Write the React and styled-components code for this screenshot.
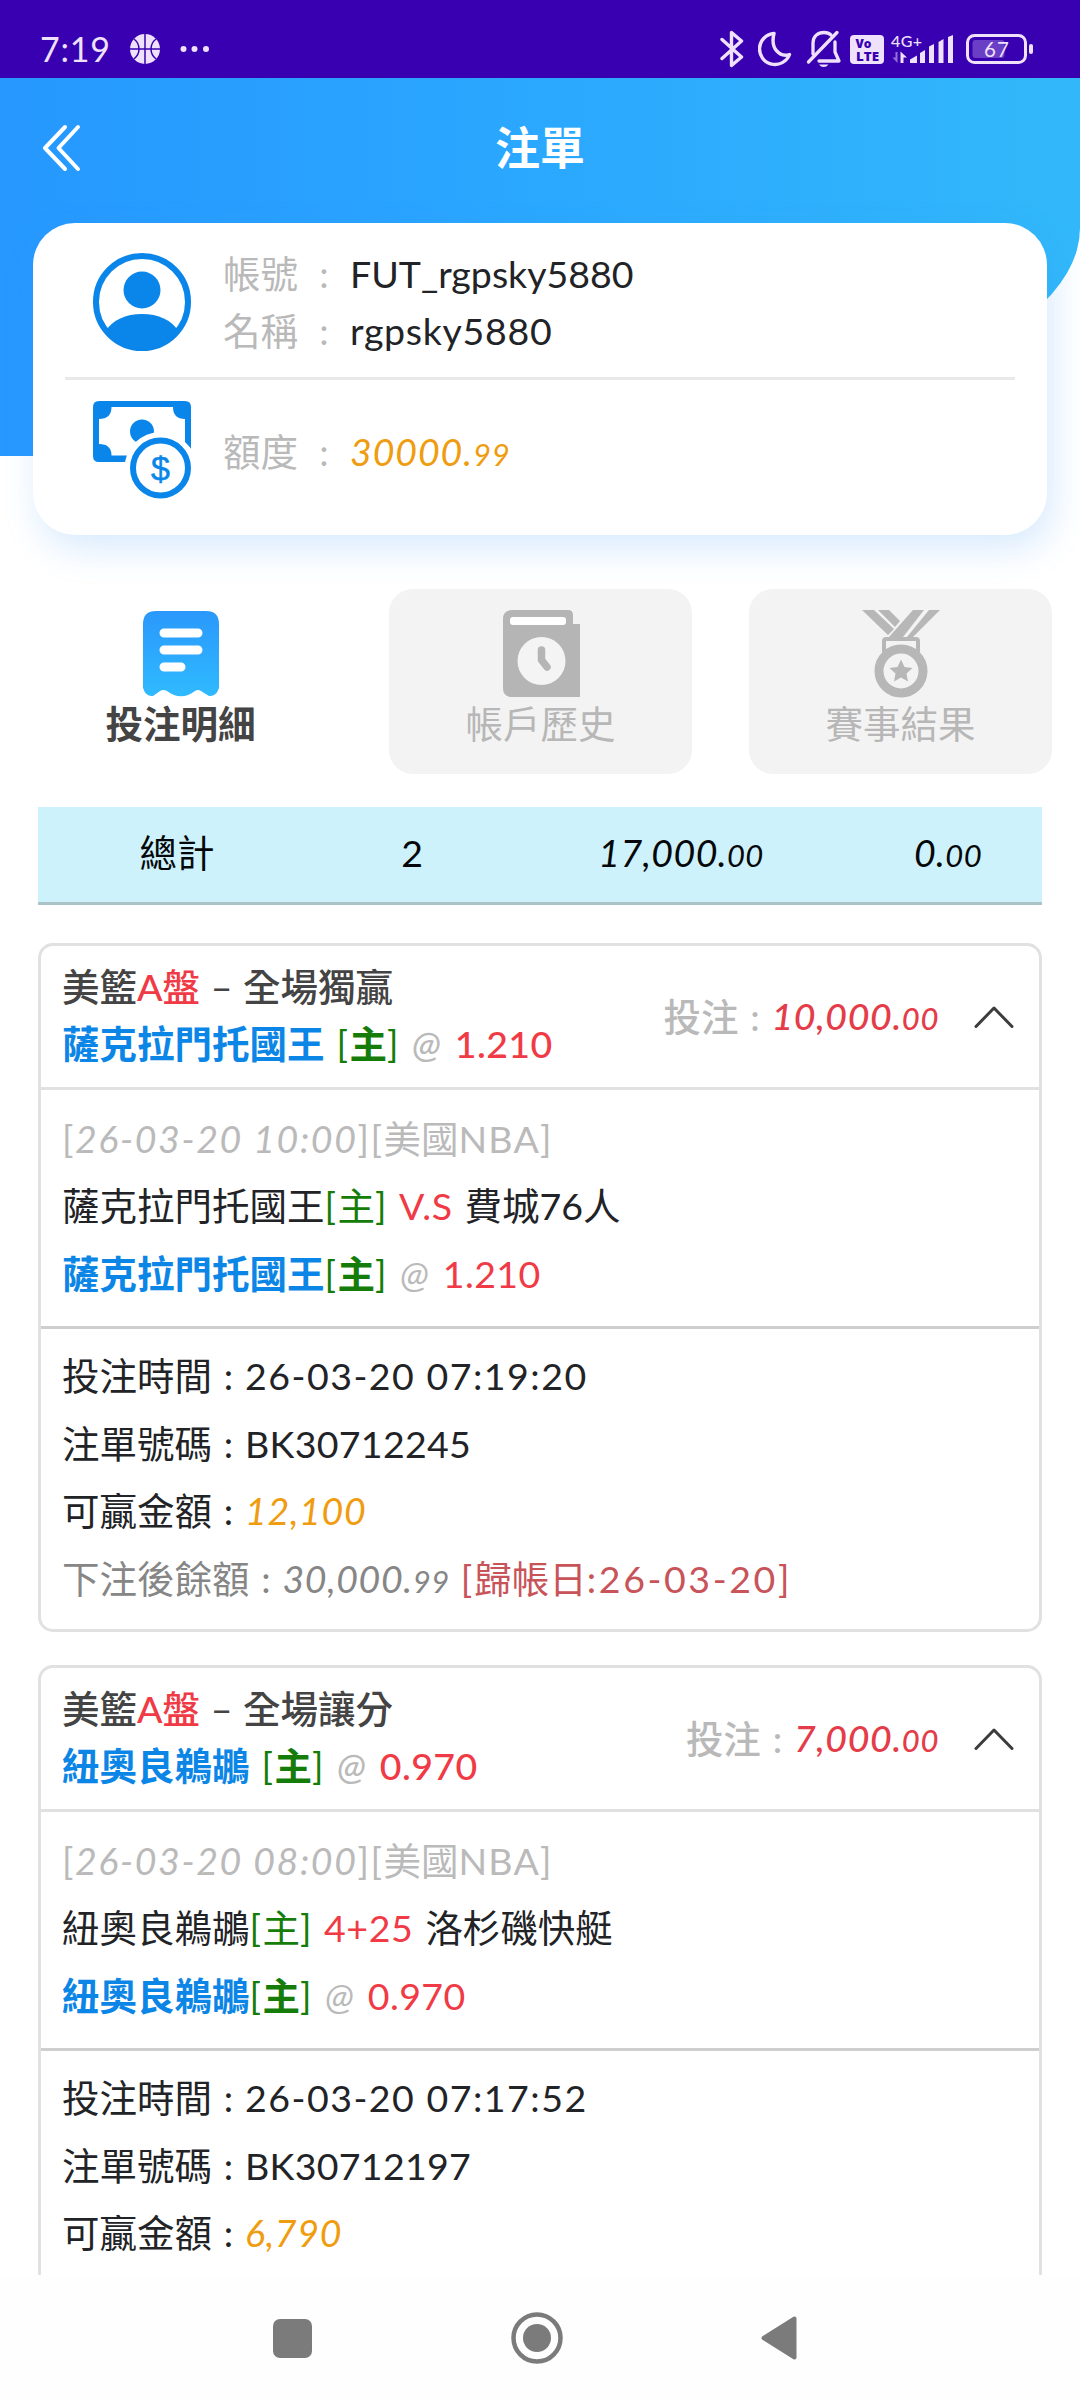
import styled, { createGlobalStyle } from "styled-components";

const GlobalStyle = createGlobalStyle`
    * {
        box-sizing: border-box;
    }
    body {
        margin: 0;
        background-color: #ffffff;
        font-family: 'Lato', 'Noto Sans CJK TC', sans-serif;
        font-size: 37.5px;
        color: #222326;
    }
    svg {
        display: block;
        flex: none;
    }
`

const Screen = styled.div`
    width: 1080px;
    height: 2401px;
    display: flex;
    flex-direction: column;
    overflow: hidden;
`

const StatusBar = styled.div`
    flex: none;
    height: 78px;
    padding: 20px 46px 0 40px;
    display: flex;
    align-items: center;
    background-color: #3800b0;
    color: #efe0fb;
`

const Clock = styled.span`
    width: 90px;
    font-size: 34px;
    line-height: 58px;
    letter-spacing: 0.8px;
`

const StatusIcons = styled.div`
    margin-left: auto;
    display: flex;
    align-items: center;
`

const StatusSlot = styled.div`
    margin-left: ${props => props.$gap || 0}px;
`

const Signal = styled.div`
    width: 64px;
    height: 36px;
    display: flex;
    flex-direction: column;
    margin-left: 7px;
`

const Network = styled.span`
    height: 17px;
    font-size: 16px;
    line-height: 20px;
    font-weight: 500;
    letter-spacing: 0.4px;
`

const Content = styled.div`
    flex: 1;
    min-height: 0;
    overflow: hidden;
`

const Hero = styled.div`
    height: 378px;
    background: linear-gradient(90deg, #2698ff 0%, #2aa6ff 45%, #32b8fa 100%);
    border-bottom-right-radius: 660px 228px;
`

const TopBar = styled.div`
    height: 140px;
    padding: 0 41px;
    display: grid;
    grid-template-columns: 1fr auto 1fr;
    align-items: center;
`

const PageTitle = styled.h1`
    margin: 0;
    font-size: 45px;
    line-height: 60px;
    font-weight: 700;
    color: #ffffff;
`

const AccountCard = styled.section`
    position: relative;
    height: 312px;
    margin: -233px 33px 0;
    padding: 0 32px;
    border-radius: 42px;
    background-color: #ffffff;
    box-shadow: 6px 14px 36px rgba(60, 150, 245, 0.2);
`

const AccountRow = styled.div`
    height: ${props => props.$height}px;
    padding: ${props => props.$top}px 28px 0;
    display: flex;
    gap: 32px;
    border-bottom: ${props => (props.$line ? '3px solid #e9e9e9' : 'none')};
`

const AccountLines = styled.div`
    padding-top: ${props => props.$top || 0}px;
    line-height: 57px;
    margin-top: -8px;
`

const Label = styled.span`
    color: #b9b9b9;
    font-weight: ${props => props.$weight || 400};
`

const Colon = styled.span`
    display: inline-block;
    width: ${props => props.$width || 33}px;
    text-align: center;
`

const Txt = styled.span`
    color: ${props => props.$color || 'inherit'};
    font-weight: ${props => props.$weight || 'inherit'};
    font-style: ${props => (props.$slant ? 'italic' : 'normal')};
    letter-spacing: ${props => props.$space || 0}px;
    margin-left: ${props => props.$gap || 0}px;
`

const Cents = styled.span`
    font-size: 31px;
`

const Tabs = styled.nav`
    margin: 54px 28px 0 29px;
    display: grid;
    grid-template-columns: repeat(3, 1fr);
    gap: 57px;
`

const Tab = styled.button`
    height: 185px;
    padding: 21px 0 0;
    border: none;
    border-radius: 24px;
    display: flex;
    flex-direction: column;
    align-items: center;
    background-color: ${props => (props.$active ? 'transparent' : '#f3f3f3')};
    color: ${props => (props.$active ? '#444444' : '#b7b7b7')};
    font-family: inherit;
    font-size: 37.5px;
    font-weight: ${props => (props.$active ? 700 : 400)};
    line-height: 52px;
`

const Summary = styled.div`
    height: 98px;
    margin: 33px 38px 0;
    display: grid;
    grid-template-columns: 278px 192px 346px 188px;
    text-align: center;
    line-height: 92px;
    color: #05080a;
    background-color: #cef2fb;
    border-bottom: 3px solid #a9c3c8;
`

const BetCard = styled.article`
    height: 689px;
    margin: 38px 38px 0;
    border: 3px solid #e1e1e1;
    border-radius: 15px;

    & + & {
        margin-top: 33px;
    }
`

const BetHead = styled.header`
    height: 144px;
    padding: 12px 25px 0 21px;
    display: flex;
    justify-content: space-between;
    line-height: 57px;
    border-bottom: 3px solid #e1e1e1;
`

const BetTitle = styled.div`
    color: #444444;
    font-weight: 500;
`

const Dash = styled.span`
    display: inline-block;
    width: 43px;
    text-align: center;
`

const BetAmount = styled.div`
    display: flex;
    align-items: center;
    height: 117px;
`

const Stake = styled.span`
    color: #e43c48;
    font-weight: 500;
    font-style: italic;
    letter-spacing: 0.6px;
    margin-right: 35px;
`

const BetMatch = styled.div`
    height: 239px;
    padding: 15px 21px 0;
    line-height: 67.3px;
    border-bottom: 3px solid #cecece;
`

const BetDetail = styled.div`
    padding: 13px 21px 0;
    line-height: 67.5px;
`

const NavBar = styled.footer`
    flex: none;
    height: 126px;
    padding: 0 283px 0 273px;
    display: flex;
    justify-content: space-between;
    align-items: center;
    background-color: #fefefe;
`

const red = '#f03a45';
const blue = '#0c86e6';
const green = '#157c0a';
const orange = '#f09c10';
const gray = '#bababa';

const BasketballIcon = () => (
    <svg width="30" height="30" viewBox="0 0 30 30">
        <circle cx="15" cy="15" r="15" fill="#efe0fb" />
        <path d="M15 0V30M0 15H30M4 5Q9 9 9 15T4 25M26 5Q21 9 21 15T26 25" fill="none" stroke="#3800b0" strokeWidth="1.5" />
    </svg>
)

const DotsIcon = () => (
    <svg width="30" height="8" viewBox="0 0 30 8" fill="#efe0fb">
        <circle cx="3.5" cy="4" r="3" />
        <circle cx="14.5" cy="4" r="3" />
        <circle cx="26" cy="4" r="3" />
    </svg>
)

const BluetoothIcon = () => (
    <svg width="24" height="38" viewBox="0 0 24 38" fill="none" stroke="#efe0fb" strokeWidth="3.4" strokeLinejoin="round" strokeLinecap="round">
        <path d="M2 9.5L21.5 27L11.5 35.5V2.5L21.5 11L2 28.5" />
    </svg>
)

const MoonIcon = () => (
    <svg width="34" height="36" viewBox="0 0 34 36" fill="none" stroke="#efe0fb" strokeWidth="3.4" strokeLinejoin="round">
        <path d="M16 2.5A15.5 15.5 0 1 0 31.5 23.5C22 26.5 12 18 16 2.5Z" />
    </svg>
)

const BellOffIcon = () => (
    <svg width="36" height="38" viewBox="0 0 36 38" fill="none" stroke="#efe0fb" strokeWidth="3.3" strokeLinecap="round" strokeLinejoin="round">
        <path d="M7 24V13C7 6 12 2.5 18 2.5C21 2.5 23.5 3.5 25 5M29 12V22L33 31H13" />
        <path d="M31 2.5L2.5 32" />
        <path d="M13 34.5H22.5Q20.5 37 17.7 37T13 34.5Z" fill="#efe0fb" stroke="none" />
    </svg>
)

const VolteIcon = () => (
    <svg width="34" height="29" viewBox="0 0 34 29">
        <rect width="34" height="29" rx="4" fill="#efe0fb" />
        <g fill="#3800b0" fontFamily="Open Sans" fontWeight="800">
            <text x="5.5" y="13" fontSize="12" textLength="16">Vo</text>
            <text x="6" y="25.5" fontSize="12.5" textLength="23" lengthAdjust="spacingAndGlyphs">LTE</text>
        </g>
    </svg>
)

const SignalIcon = () => (
    <svg width="64" height="34" viewBox="0 0 64 34" fill="#efe0fb" style={{ marginTop: -17 }}>
        <path d="M6.5 21V32L1.5 26.5H4.5V21Z" opacity="0.5" />
        <path d="M9.5 32V20.5L16 26.5H12.5V32Z" />
        <path d="M19 32V28.5L26 24.5V32Z" />
        <path d="M29 32V22L34 19V32Z" />
        <path d="M38 32V15.5L43 13V32Z" />
        <path d="M47.5 32V11L52.5 8V32Z" />
        <path d="M57 32V6L62 4V32Z" />
    </svg>
)

const BatteryIcon = () => (
    <svg width="68" height="30" viewBox="0 0 68 30">
        <rect x="1.5" y="1.5" width="58" height="27" rx="7" fill="none" stroke="#efe0fb" strokeWidth="3" />
        <rect x="6.5" y="6" width="32" height="18" rx="3" fill="#6a3fc6" />
        <rect x="63" y="10" width="4" height="10" rx="2" fill="#efe0fb" />
        <text x="18" y="23" fontFamily="Lato" fontSize="20.5" fill="#efe0fb" textLength="25">67</text>
    </svg>
)

const BackIcon = () => (
    <svg width="42" height="48" viewBox="0 0 42 48" fill="none" stroke="#ffffff" strokeWidth="4" strokeLinecap="round" strokeLinejoin="round">
        <path d="M24 3L4 24L24 45M37 3L17.5 24L37 45" />
    </svg>
)

const UserIcon = () => (
    <svg width="98" height="98" viewBox="0 0 98 98">
        <defs>
            <clipPath id="user-ring">
                <circle cx="49" cy="49" r="48" />
            </clipPath>
        </defs>
        <circle cx="49" cy="49" r="46" fill="none" stroke="#0a85e9" strokeWidth="6" />
        <circle cx="49" cy="37" r="18.5" fill="#0a85e9" />
        <path d="M13 78C19 67 33 61 49 61S79 67 85 78L70 98H28Z" fill="#0a85e9" clipPath="url(#user-ring)" />
    </svg>
)

const MoneyIcon = () => (
    <svg width="98" height="98" viewBox="0 0 98 98">
        <path d="M6 0H92Q98 0 98 6V61H6Q0 61 0 55V6Q0 0 6 0Z" fill="#0a85e9" />
        <path d="M18.5 6H80Q80 18 92 18V61H34V54.5H18.5Q18.5 43 6 43V18Q18.5 18 18.5 6Z" fill="#ffffff" />
        <circle cx="49" cy="30.5" r="12" fill="#0a85e9" />
        <circle cx="67.5" cy="67" r="36" fill="#ffffff" />
        <path d="M92 30H98V47L92 41Z" fill="#0a85e9" />
        <circle cx="67.5" cy="67" r="27.5" fill="#ffffff" stroke="#0a85e9" strokeWidth="6" />
        <text x="67.5" y="79" textAnchor="middle" fontFamily="Liberation Sans" fontSize="34" fill="#0a85e9" stroke="#0a85e9" strokeWidth="0.5">$</text>
    </svg>
)

const ReceiptIcon = () => (
    <svg width="78" height="88" viewBox="0 0 78 88">
        <defs>
            <linearGradient id="receipt" x1="0" y1="0" x2="0" y2="1">
                <stop offset="0" stopColor="#2a98fb" />
                <stop offset="1" stopColor="#2fbaff" />
            </linearGradient>
        </defs>
        <path d="M14 1H64Q77 1 77 14V78Q74 87 67 86L59 81Q56 79 53 81C44 88 34 88 25 81Q21 79 18 81L11 86Q4 87 1 78V14Q1 1 14 1Z" fill="url(#receipt)" />
        <path d="M22 23H56M22 40H56M22 57H39" stroke="#ffffff" strokeWidth="9" strokeLinecap="round" />
    </svg>
)

const HistoryIcon = () => (
    <svg width="78" height="88" viewBox="0 0 78 88">
        <path d="M10 0H66Q71 0 71 5V14H78V87H10Q1 87 1 78V9Q1 0 10 0Z" fill="#b5b5b5" />
        <rect x="8" y="7" width="56" height="8" rx="3" fill="#ffffff" />
        <circle cx="39.5" cy="51" r="24" fill="#f4f4f4" />
        <path d="M39.5 40V50L45 57" fill="none" stroke="#b5b5b5" strokeWidth="7.5" strokeLinecap="round" strokeLinejoin="round" />
    </svg>
)

const MedalIcon = () => (
    <svg width="78" height="88" viewBox="0 0 78 88">
        <path d="M0 0H12L32 19L26 25ZM16 0H27L38 11L33 17ZM27 27L51 0H62L41 27ZM45 27L67 0H78L51 27Z" fill="#b7b7b7" />
        <path d="M22 42V31Q22 29 24 29H54Q56 29 56 31V42" fill="none" stroke="#b7b7b7" strokeWidth="4" />
        <circle cx="39" cy="61" r="22" fill="#f3f3f3" stroke="#b7b7b7" strokeWidth="9" />
        <path d="M39 49.5L42.5 57L50.5 58L44.5 63.5L46 71.5L39 67.5L32 71.5L33.5 63.5L27.5 58L35.5 57Z" fill="#b7b7b7" />
    </svg>
)

const ChevronIcon = () => (
    <svg width="40" height="24" viewBox="0 0 40 24" fill="none" stroke="#3c3c3e" strokeWidth="3" strokeLinecap="round" strokeLinejoin="round">
        <path d="M2 21.5L20 3L38 21.5" />
    </svg>
)

const Odds = (props) => {
    const { value, gap } = props;
    return (
        <>
            <Txt $color={green} $weight={700}>
                <Txt $gap={gap} $weight={400} $space={1.5}>[</Txt>主<Txt $weight={400} $space={1.5}>]</Txt>
            </Txt>
            <Txt $color={gray} $slant $gap={12}>@</Txt>
            <Txt $color={red} $gap={14} $space={0.4}>{value}</Txt>
        </>
    )
}

const Bet = (props) => {
    const { play, team, versus, rival, odds, stake, start, time, number, win, balance } = props;
    return (
        <BetCard>
            <BetHead>
                <BetTitle>
                    <div>
                        美籃<Txt $color={red}>A盤</Txt><Dash>–</Dash>{play}
                    </div>
                    <div>
                        <Txt $color={blue} $weight={700}>{team}</Txt>
                        <Odds value={odds} gap={12} />
                    </div>
                </BetTitle>
                <BetAmount>
                    <Label $weight={500}>投注<Colon>:</Colon></Label>
                    <Stake>{stake}.<Cents>00</Cents></Stake>
                    <ChevronIcon />
                </BetAmount>
            </BetHead>
            <BetMatch>
                <Txt as="div" $color={gray}>
                    <Txt $space={1.5}>[<Txt $space={1.6} $slant>{start}</Txt>][</Txt>美國<Txt $space={1.2}>NBA]</Txt>
                </Txt>
                <div>
                    {team}<Txt $color={green}><Txt $space={1.5}>[</Txt>主<Txt $space={1.5}>]</Txt></Txt>
                    <Txt $color={red} $gap={11} $space={0.6}>{versus}</Txt>
                    <Txt $gap={12}>{rival}</Txt>
                </div>
                <div>
                    <Txt $color={blue} $weight={700}>{team}</Txt>
                    <Odds value={odds} />
                </div>
            </BetMatch>
            <BetDetail>
                <div>投注時間<Colon>:</Colon><Txt $space={1.5}>{time}</Txt></div>
                <div>注單號碼<Colon>:</Colon><Txt $space={0.3}>{number}</Txt></div>
                <div>可贏金額<Colon>:</Colon><Txt $color={orange} $slant $space={0.7}>{win}</Txt></div>
                {balance && (
                    <Txt as="div" $color="#868686">
                        下注後餘額<Colon>:</Colon><Txt $slant $space={0.6}>{balance}.<Cents>99</Cents></Txt>
                        <Txt $color="#c8545a" $gap={11}><Txt $space={2}>[</Txt>歸帳日<Txt $space={2.6}>:26-03-20]</Txt></Txt>
                    </Txt>
                )}
            </BetDetail>
        </BetCard>
    )
}

const App = () => {
    return (
        <Screen>
            <GlobalStyle />
            <StatusBar>
                <Clock>7:19</Clock>
                <BasketballIcon />
                <StatusSlot $gap={20}><DotsIcon /></StatusSlot>
                <StatusIcons>
                    <BluetoothIcon />
                    <StatusSlot $gap={14}><MoonIcon /></StatusSlot>
                    <StatusSlot $gap={14}><BellOffIcon /></StatusSlot>
                    <StatusSlot $gap={8}><VolteIcon /></StatusSlot>
                    <Signal>
                        <Network>4G+</Network>
                        <SignalIcon />
                    </Signal>
                    <StatusSlot $gap={11}><BatteryIcon /></StatusSlot>
                </StatusIcons>
            </StatusBar>
            <Content>
                <Hero>
                    <TopBar>
                        <BackIcon />
                        <PageTitle>注單</PageTitle>
                    </TopBar>
                </Hero>
                <AccountCard>
                    <AccountRow $height={157} $top={30} $line>
                        <UserIcon />
                        <AccountLines>
                            <div>
                                <Label>帳號<Colon $width={52}>:</Colon></Label>
                                <Txt>FUT_rgpsky5880</Txt>
                            </div>
                            <div>
                                <Label>名稱<Colon $width={52}>:</Colon></Label>
                                <Txt $space={0.7}>rgpsky5880</Txt>
                            </div>
                        </AccountLines>
                    </AccountRow>
                    <AccountRow $height={155} $top={21}>
                        <MoneyIcon />
                        <AccountLines $top={30}>
                            <Label>額度<Colon $width={52}>:</Colon></Label>
                            <Txt $color={orange} $slant $space={0.9}>30000.<Cents>99</Cents></Txt>
                        </AccountLines>
                    </AccountRow>
                </AccountCard>
                <Tabs>
                    <Tab $active><ReceiptIcon />投注明細</Tab>
                    <Tab><HistoryIcon />帳戶歷史</Tab>
                    <Tab><MedalIcon />賽事結果</Tab>
                </Tabs>
                <Summary>
                    <span>總計</span>
                    <span>2</span>
                    <Txt $slant $space={0.4}>17,000.<Cents>00</Cents></Txt>
                    <Txt $slant $space={0.4}>0.<Cents>00</Cents></Txt>
                </Summary>
                <Bet
                    play="全場獨贏"
                    team="薩克拉門托國王"
                    versus="V.S"
                    rival="費城76人"
                    odds="1.210"
                    stake="10,000"
                    start="26-03-20 10:00"
                    time="26-03-20 07:19:20"
                    number="BK30712245"
                    win="12,100"
                    balance="30,000"
                />
                <Bet
                    play="全場讓分"
                    team="紐奧良鵜鶘"
                    versus="4+25"
                    rival="洛杉磯快艇"
                    odds="0.970"
                    stake="7,000"
                    start="26-03-20 08:00"
                    time="26-03-20 07:17:52"
                    number="BK30712197"
                    win="6,790"
                />
            </Content>
            <NavBar>
                <svg width="39" height="39" viewBox="0 0 39 39">
                    <rect width="39" height="39" rx="7" fill="#7b7b7b" />
                </svg>
                <svg width="52" height="52" viewBox="0 0 52 52">
                    <circle cx="26" cy="26" r="23.5" fill="none" stroke="#7b7b7b" strokeWidth="4.5" />
                    <circle cx="26" cy="26" r="14" fill="#7b7b7b" />
                </svg>
                <svg width="36" height="44" viewBox="0 0 36 44">
                    <path d="M33.5 2.5V41.5L2.5 22Z" fill="#7b7b7b" stroke="#7b7b7b" strokeWidth="4" strokeLinejoin="round" />
                </svg>
            </NavBar>
        </Screen>
    )
}

export default App
